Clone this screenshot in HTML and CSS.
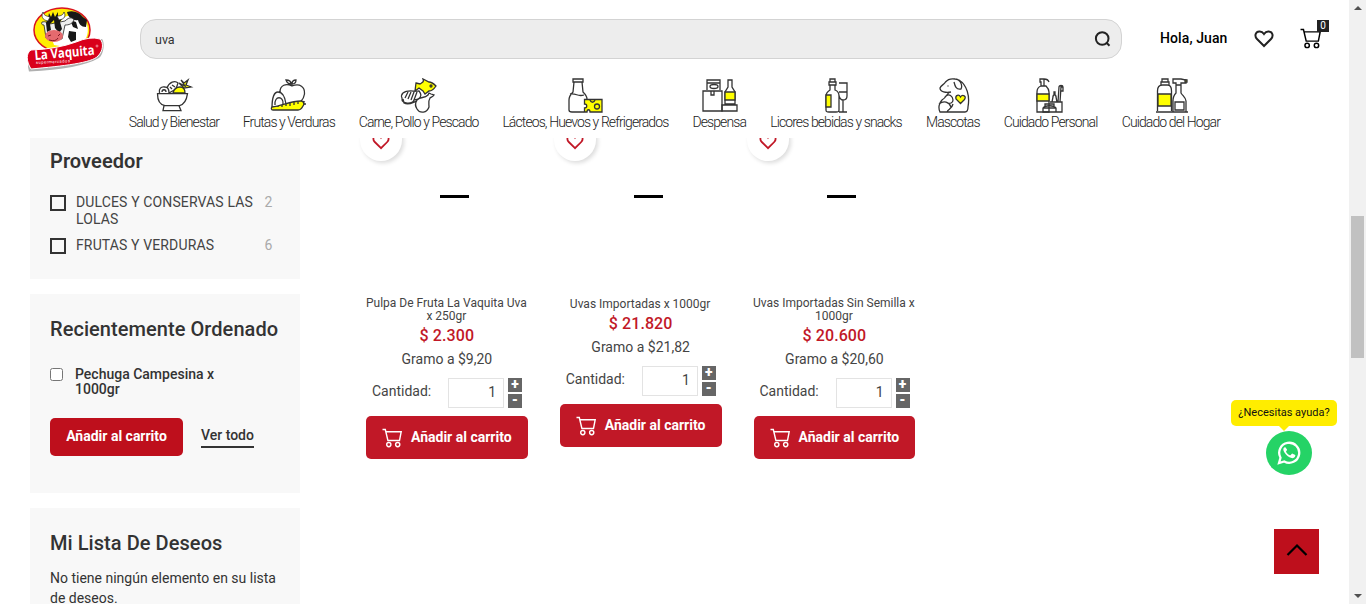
FILE: index.html
```html
<!DOCTYPE html>
<html lang="es">
<head>
<meta charset="utf-8">
<title>La Vaquita</title>
<link rel="stylesheet" href="styles.css">
</head>
<body>
<svg class="defs" width="0" height="0">
  <symbol id="heart" viewBox="0 0 20 18"><path d="M10 16 3 9C.3 6.200 1.200 1.700 5.300 1.400 7.500 1.200 9 2.500 10 4c1-1.500 2.500-2.800 4.700-2.600C18.800 1.700 19.700 6.200 17 9Z"/></symbol>
  <symbol id="cart" viewBox="0 0 20 20"><path d="M.5 1.500h2.800l2.600 11h11.600l1.700-8.800H4.200"/><circle cx="6.800" cy="16.600" r="2.100"/><circle cx="15.700" cy="16.600" r="2.100"/></symbol>
</svg>
<div class="window">
  <div class="page">
    <header class="header">
      <div class="topbar">
        <svg class="logo" width="80" height="66" viewBox="0 0 80 66">
          <path d="M5 49Q40 43 76 33c3 3 2 15-3 19Q54 63 3 65.500Q0 57 5 49Z" fill="#b0b0b0"/>
          <ellipse cx="36" cy="24" rx="28" ry="22" fill="#fe0" stroke="#d9121f" stroke-width="1.500"/>
          <path d="M37 12c8-5 18-2 23 5 3 5 2 12-1 17l-5 6-14 1-12-2-3-9Z" fill="#fff"/>
          <path d="M41 6c6-2 12 0 16 5l4 3-1 7c-5 0-7-3-8-7-4 1-10-2-11-8ZM44 14l6 2 2 7-5-2ZM43 25l7 1v8l-5 2-3-5Z" fill="#181818"/>
          <path d="M16 16c4-1 5 1 8 2l15-3c5-5 8-3 9-1-2 4-5 5-9 5l-3 14-16-1-2-13c-2 0-3-1-2-3Z" fill="#eee" stroke="#222" stroke-width=".8"/>
          <path d="M23 7l2 4 2-5 2 5 3-5v6l5-1-3 5 2 7-3 4-4-5-1-8-4 4 1 6-4 2-1-9 2-5Z" fill="#161616"/>
          <path d="M22 15c-6-1-7-5-5-9 1 4 4 4 7 5ZM33 14c6-1 7-4 5-8-1 4-5 4-7 4Z" fill="#fff" stroke="#222" stroke-width=".7"/>
          <ellipse cx="28" cy="30" rx="9" ry="6" fill="#e56a6e"/><path d="M22 30l3-1m7 1 2-2m-11 6q7 2 9-2" fill="none" stroke="#801824"/>
          <path d="M5 44Q31 43 50 36q14-6 24-3c4 4 3 12-2 17-6 7-35 10-67 13C0 55 0 47 5 44Z" fill="#d9001b" stroke="#fff" stroke-width="1"/>
          <text class="logo-name" x="9" y="54" transform="rotate(-5 9 54)" textLength="60" lengthAdjust="spacingAndGlyphs">La Vaquita</text>
          <text class="logo-sub" x="10" y="58" transform="rotate(-3 10 58)" textLength="34">supermercados</text>
          <circle cx="71" cy="40" r="1" fill="none" stroke="#fff" stroke-width=".5"/>
        </svg>
        <div class="search"><span>uva</span><svg width="18" height="18" viewBox="0 0 18 18"><circle cx="8.200" cy="8.500" r="6.300"/><path d="m12.500 12.800 3 3"/></svg></div>
        <strong class="hello">Hola, Juan</strong>
        <svg class="fav" width="20" height="18"><use href="#heart"/></svg>
        <div class="minicart"><svg width="21" height="21"><use href="#cart"/></svg><span class="count">0</span></div>
      </div>
      <nav class="nav">
        <a class="cat c1"><svg viewBox="0 0 40 36"><path d="M2.500 15.700h30c-1 7-4 11-8 12H10c-5-1-7.500-6-7.500-12Zm6.500 12-1 5h18l-2-5"/><path d="M4.500 15c-1-4 1.500-7 5.500-6 3 0 4 2 4 6M7 14c0-3 4-3 4 0M12 10c2-6 8-8 11-5l-2 6-7 4M15 9l2 2m0-4 3 2"/><path class="y" d="M18 15c1-4 4-6 7-6s5 2 5 6Z"/><path class="y" d="m26 2 4 6-6-3 5 5 7-1-5-2 2-5-4 3Z"/></svg><span>Salud y Bienestar</span></a>
        <a class="cat c2"><svg viewBox="0 0 40 36"><path d="M11 14c0-7 6-9 12-6 8-3 13 1 12.500 8-.5 4-2 6-4 8M23 8V4m0 2c3 0 4-2 4-4-3 0-4 1-4 4Zm-1 0c-3 0-4-1-5-4 3 0 5 1 5 4ZM3 30c0-10 2-16 6-16 5 0 7 5 8 12M6 27c-1-10 9-9 8-1"/><path class="y" d="M3 29c10-1 18-6 29-6 3 1 4 3 2 5-1 2-2 4-5 4H4c-2 0-2-2-1-3Z"/><path d="M34 26h3m-4-3 3 1M9 28v1m4-2v2m4-3v2m4-3v3m4-4v3m4-3v2"/></svg><span>Frutas y Verduras</span></a>
        <a class="cat c3"><svg viewBox="0 0 40 36"><path d="M4 15c5-4 11-1 16-2 4 5 1 8-5 9-1 4-13 5-12-2-1-2 0-4 1-5Zm0 6 1 4c5 3 9-1 13-2M6 20l3-6m0 7 3-7m0 8 3-8m0 8 3-8M18 22c4-4 7-1 11-5l1-2 2 1 3 1c-1 2-3 2-4 3-2 3-1 6-1 9-2 6-9 7-12 2-2-3-2-6 0-9Z"/><path class="y" d="m17 5 4 1c3-2 4-2 3-5l6 3c3 0 5 2 7 4-2 3-4 5-7 5l-4 3-2-3-4-3-4 3Z"/><circle cx="32" cy="8" r="1"/></svg><span>Carne, Pollo y Pescado</span></a>
        <a class="cat c4"><svg viewBox="0 0 40 36"><path d="M7 1h10v3H7Zm1 3-1 10c-3 3-4 5-4 8v10c0 1 1 2 3 2h12M16 4l1 10c2 2 4 4 4 7M4 16c7-1 7 3 14 1"/><path class="y" d="M18.500 21.500h17.500V34H24c0-3-3-3-3 0h-2.500v-4c3 0 3-4 0-4Z"/><circle cx="31" cy="28.500" r="2.500"/><path d="M24 22c1 3 4 3 5 0"/></svg><span>Lácteos, Huevos y Refrigerados</span></a>
        <a class="cat c5"><svg viewBox="0 0 40 36"><path d="M3 13h19v20H3ZM7 12V2h13v10M7 5h13"/><ellipse cx="14" cy="8.500" rx="4" ry="2"/><path d="M11 13v4h3v-4M28 2h4v7l3 5v12H25V14l3-5ZM22 27h15v6H22Z"/><path class="y" d="M25 14h10v8H25Z"/></svg><span>Despensa</span></a>
        <a class="cat c6"><svg viewBox="0 0 40 36"><path d="M14 1h5v3h-5Zm-1 3h7v3h-7Zm1 3v5c-3 2-4 4-4 6v14c0 2 1 2 3 2h7c2 0 3 0 3-2V18c0-3-1-5-4-6V7M23 5h8v13c0 3-2 4-4 4s-3-1-4-4m0-4h8m-4 8v12m-4 0h8"/><path class="y" d="M10 17h5v12h-5Z"/></svg><span>Licores bebidas y snacks</span></a>
        <a class="cat c7"><svg viewBox="0 0 40 36"><path d="M18 14c-5 1-11 0-11-4 1-3 4-3 5.500-6C15 1 19 .5 22 1c5 0 8 6 6 10-5 1-6-3-7-7M15 7.500v1M26 2c8 5 11 16 9 27 0 3-1 5-3 5H7c-2-4-1-9 2-12 5-3 4-6 8-8M6 26c5-4 10-2 12 3M14 34c1-3 5-3 6-8M12 19c4-5 8 0 8 3s-3 4-6 3"/><path class="y" d="m27.500 25.500-4.500-4.500c-1-4 3-5 4.500-2 2-3 6.500-1 4 2.500Z"/></svg><span>Mascotas</span></a>
        <a class="cat c8"><svg viewBox="0 0 40 36"><path d="M10 8V4H9V1h4c2 0 4 0 5 3M13 1v7m-3 0h5c2 2 3 4 3 6v20H6V14c0-3 1-5 4-6Z"/><path class="y" d="M6 16h12v7H6Z"/><path d="M19 24h12v10H12v-4c2-3 11-3 13 0v4M14 28v-2h9v3M12 30h13M21 24l1-5c0-3 3-3 3 0l1 5m-3-7v-3h1v3m3 7 1-15c0-2 4-2 4 0h-2l-1 15m1-11h2V9"/></svg><span>Cuidado Personal</span></a>
        <a class="cat c9"><svg viewBox="0 0 40 36"><path d="M11 1h6v3h-6ZM10 7V4h8v3M6.500 33V13c0-4 2-6 5-6h5c3 0 4 2 4 6v20M5 34h32M22 1h8l5 1v3h-5v2h-5V5h-3ZM25 7v8c-2 2-3 5-3 8v11m8-27v8c2 3 5 5 5 8v11M24 24h9v8h-9Z"/><path class="y" d="M7 16h13v12H7Z"/><path class="y" d="M34 2h2v2h-2Z"/></svg><span>Cuidado del Hogar</span></a>
      </nav>
    </header>
    <main class="main">
      <aside class="sidebar">
        <section class="panel provider">
          <h2>Proveedor</h2>
          <div class="filter"><i class="box"></i><span>DULCES Y CONSERVAS LAS LOLAS</span><em>2</em></div>
          <div class="filter"><i class="box"></i><span>FRUTAS Y VERDURAS</span><em>6</em></div>
        </section>
        <section class="panel recent">
          <h2>Recientemente Ordenado</h2>
          <label class="ordered"><input type="checkbox"><span>Pechuga Campesina x 1000gr</span></label>
          <div class="actions"><button class="add">Añadir al carrito</button><a class="all">Ver todo</a></div>
        </section>
        <section class="panel wishes">
          <h2>Mi Lista De Deseos</h2>
          <p>No tiene ningún elemento en su lista de deseos.</p>
        </section>
      </aside>
      <div class="products">
        <article class="card">
          <div class="photo"><span class="wish"><svg width="18" height="16"><use href="#heart"/></svg></span><i class="dash"></i></div>
          <h3>Pulpa De Fruta La Vaquita Uva<br>x 250gr</h3>
          <strong class="price">$ 2.300</strong><span class="unit">Gramo a $9,20</span>
          <div class="qty"><span>Cantidad:</span><b class="num">1</b><div class="steps"><i>+</i><i>-</i></div></div>
          <button class="buy"><svg width="20" height="20"><use href="#cart"/></svg>Añadir al carrito</button>
        </article>
        <article class="card">
          <div class="photo"><span class="wish"><svg width="18" height="16"><use href="#heart"/></svg></span><i class="dash"></i></div>
          <h3 class="single">Uvas Importadas x 1000gr</h3>
          <strong class="price">$ 21.820</strong><span class="unit">Gramo a $21,82</span>
          <div class="qty"><span>Cantidad:</span><b class="num">1</b><div class="steps"><i>+</i><i>-</i></div></div>
          <button class="buy"><svg width="20" height="20"><use href="#cart"/></svg>Añadir al carrito</button>
        </article>
        <article class="card">
          <div class="photo"><span class="wish"><svg width="18" height="16"><use href="#heart"/></svg></span><i class="dash"></i></div>
          <h3>Uvas Importadas Sin Semilla x<br>1000gr</h3>
          <strong class="price">$ 20.600</strong><span class="unit">Gramo a $20,60</span>
          <div class="qty"><span>Cantidad:</span><b class="num">1</b><div class="steps"><i>+</i><i>-</i></div></div>
          <button class="buy"><svg width="20" height="20"><use href="#cart"/></svg>Añadir al carrito</button>
        </article>
      </div>
    </main>
    <div class="help">¿Necesitas ayuda?</div>
    <a class="whatsapp"><svg width="24" height="24" viewBox="0 0 24 24"><path d="M2 22l1.500-5.300A10 10 0 1 1 7.300 20.500Z" fill="none" stroke="#fff" stroke-width="2.300"/><path d="M8.400 6.300c-.6-.3-1.200 0-1.700.8-.7 1.200-.4 2.800.6 4.200 1.800 2.900 4.300 5 7.300 5.800 1.700.4 3.500-.7 3.700-2.300.1-.6 0-.8-.5-1l-2.200-1.100c-.4-.2-.7 0-1 .4l-.8 1c-.3.300-.6.300-1 .1-1.500-.7-2.800-1.800-3.700-3.300-.2-.4 0-.6.2-.9l.6-.8c.2-.2.200-.5.100-.8Z" fill="#fff" stroke="none"/></svg></a>
    <a class="totop"><svg width="22" height="14" viewBox="0 0 22 14"><path d="m1.500 12 9.500-9.500 9.500 9.500"/></svg></a>
  </div>
  <div class="scrollbar"><i class="up"></i><i class="thumb"></i><i class="down"></i></div>
</div>
</body>
</html>
```

FILE: styles.css
```css
* { box-sizing: border-box; }
body { margin: 0; background: #fff; color: #333; font: 14px/17px Roboto, sans-serif; overflow: hidden; }
h2, h3, p { margin: 0; }
i, em { font-style: normal; }
svg { fill: none; stroke: currentColor; flex: none; }
.defs { position: absolute; }
.window { display: flex; height: 604px; overflow: hidden; }
.page { position: relative; width: 1349px; height: 604px; overflow: hidden; }
.header { height: 138px; }
.topbar { display: flex; align-items: flex-start; height: 78px; padding-left: 26px; }
.logo { margin-top: 6px; stroke: none; overflow: visible; }
.logo-name { fill: #fff; font: bold 13.5px "Open Sans", sans-serif; }
.logo-sub { fill: #fff; font: 4px Roboto, sans-serif; }
.search { display: flex; align-items: center; justify-content: space-between; width: 982px; height: 40px; margin: 19px 0 0 34px; padding: 0 9px 0 14px; border: 1px solid #d3d3d3; border-radius: 16px; background: #ededed; font-size: 12.500px; }
.search svg { stroke: #222; stroke-width: 2; }
.hello { margin: 30px 0 0 38px; width: 67px; color: #000; font-weight: 500; letter-spacing: .1px; white-space: nowrap; }
.fav { margin: 30px 0 0 27px; stroke: #222; stroke-width: 2; }
.minicart { position: relative; margin: 28px 0 0 26px; stroke-width: 1.400; color: #000; }
.minicart svg { display: block; }
.count { position: absolute; left: 17px; top: -8px; width: 12px; height: 12px; background: #222; color: #fff; font-size: 10px; line-height: 12px; text-align: center; }
.nav { display: flex; gap: 23.8px; height: 60px; padding-left: 129px; }
.cat { display: flex; flex-direction: column; align-items: center; font-weight: 300; font-size: 14px; letter-spacing: -.9px; white-space: nowrap; color: #222; }
.cat svg { width: 40px; height: 36px; margin-left: 1px; stroke: #333; stroke-width: 1.300; }
.cat .y { fill: #ff0; }
.c1 { width: 90px; } .c2 { width: 92px; } .c3 { width: 120px; } .c4 { width: 166px; } .c5 { width: 54px; } .c6 { width: 132px; } .c7 { width: 54px; } .c8 { width: 94px; } .c9 { width: 99px; }
.main { display: flex; height: 466px; padding-left: 30px; overflow: hidden; }
.sidebar { display: flex; flex-direction: column; gap: 15px; width: 270px; }
.panel { flex: none; padding: 23px 20px; background: #f8f8f8; }
.panel h2 { font-size: 20px; line-height: 24px; font-weight: 500; letter-spacing: .06px; white-space: nowrap; }
.panel.provider { height: 141px; padding-top: 11px; }
.provider h2 { font-weight: 600; }
.filter { display: flex; align-items: flex-start; margin-top: 9px; color: #444; letter-spacing: .13px; }
h2 + .filter { margin-top: 21px; }
.box { flex: none; width: 16px; height: 16px; margin: 1px 10px 0 0; border: 2px solid #333; }
.filter span { width: 188.500px; }
.filter em { color: #aaa; }
.recent { height: 199px; }
.ordered { display: flex; margin-top: 26px; line-height: 15px; font-weight: 500; }
.ordered input { flex: none; width: 13px; height: 13px; margin: 1px 12px 0 0; }
.ordered span { width: 165px; }
.actions { display: flex; margin-top: 21px; gap: 18px; }
button { border: 0; padding: 0; border-radius: 5px; color: #fff; font: bold 14px/17px Roboto, sans-serif; white-space: nowrap; }
.add { width: 133px; height: 38px; padding-bottom: 1px; background: #be0f1c; }
.all { height: 21px; margin-top: 9px; border-bottom: 2px solid #333; font-weight: 500; }
.wishes { height: 150px; }
.wishes p { margin-top: 13px; line-height: 20px; width: 236px; }
.products { display: flex; align-items: flex-start; gap: 32px; margin-left: 66px; }
.card { display: flex; flex-direction: column; align-items: center; width: 161.750px; color: #444; }
.photo { position: relative; width: 161.750px; height: 159px; padding: 57px 0 0 73.900px; }
.wish { position: absolute; left: -6.200px; top: -19px; display: flex; align-items: center; justify-content: center; width: 42px; height: 42px; padding-top: 3px; border-radius: 50%; background: #fff; color: #c11827; box-shadow: 2px 2px 4px rgba(0,0,0,.14); }
.wish svg { stroke-width: 2; }
.dash { display: block; width: 29px; height: 3px; background: #000; }
.card h3 { height: 26px; margin: 0 -4px 0 -5px; font-size: 12px; line-height: 13px; font-weight: 400; text-align: center; white-space: nowrap; }
.card .single { height: 14px; padding-top: 1px; }
.price { margin-top: 3px; font-size: 16px; line-height: 20px; font-weight: 500; letter-spacing: .1px; color: #c11827; }
.unit { margin-top: 4px; line-height: 18px; }
.qty { display: flex; align-self: stretch; margin-top: 10px; padding-left: 6px; height: 30px; line-height: 27px; }
.qty > span { width: 76px; }
.num { width: 56px; height: 30px; padding-right: 7px; border: 1px solid #e3e3e3; font-weight: 400; text-align: right; }
.steps { display: grid; gap: 2px; margin-left: 4px; }
.steps i { width: 14px; height: 14px; background: #666; color: #fff; font-weight: 900; line-height: 13px; text-align: center; }
.buy { display: flex; align-items: center; align-self: stretch; gap: 9px; height: 43px; margin-top: 8px; padding-left: 16px; background: #c11827; }
.buy svg { stroke-width: 1.400; }
.help { position: absolute; left: 1231px; top: 400px; width: 106px; height: 26px; border-radius: 5px; background: #ffed00; color: #111; font-size: 11px; line-height: 25px; text-align: center; }
.help::after { content: ""; position: absolute; left: 48px; top: 26px; border: 5px solid transparent; border-top-color: #ffed00; border-bottom: 0; }
.whatsapp { position: absolute; left: 1266px; top: 431px; display: flex; align-items: center; justify-content: center; width: 46px; height: 44px; border-radius: 50%; background: #25d366; }
.totop { position: absolute; left: 1274px; top: 529px; display: flex; align-items: center; justify-content: center; width: 45px; height: 45px; padding-bottom: 3px; background: #be0f1c; color: #000; }
.totop svg { stroke-width: 2.200; }
.scrollbar { display: flex; flex-direction: column; align-items: center; width: 17px; height: 604px; padding: 6px 0; background: #f1f1f1; }
.up, .down { border: 4px solid transparent; }
.up { border-top: 0; border-bottom-color: #505050; }
.down { border-bottom: 0; border-top-color: #505050; margin-top: auto; }
.thumb { width: 13px; height: 142px; margin-top: 206px; background: #c1c1c1; }
```
